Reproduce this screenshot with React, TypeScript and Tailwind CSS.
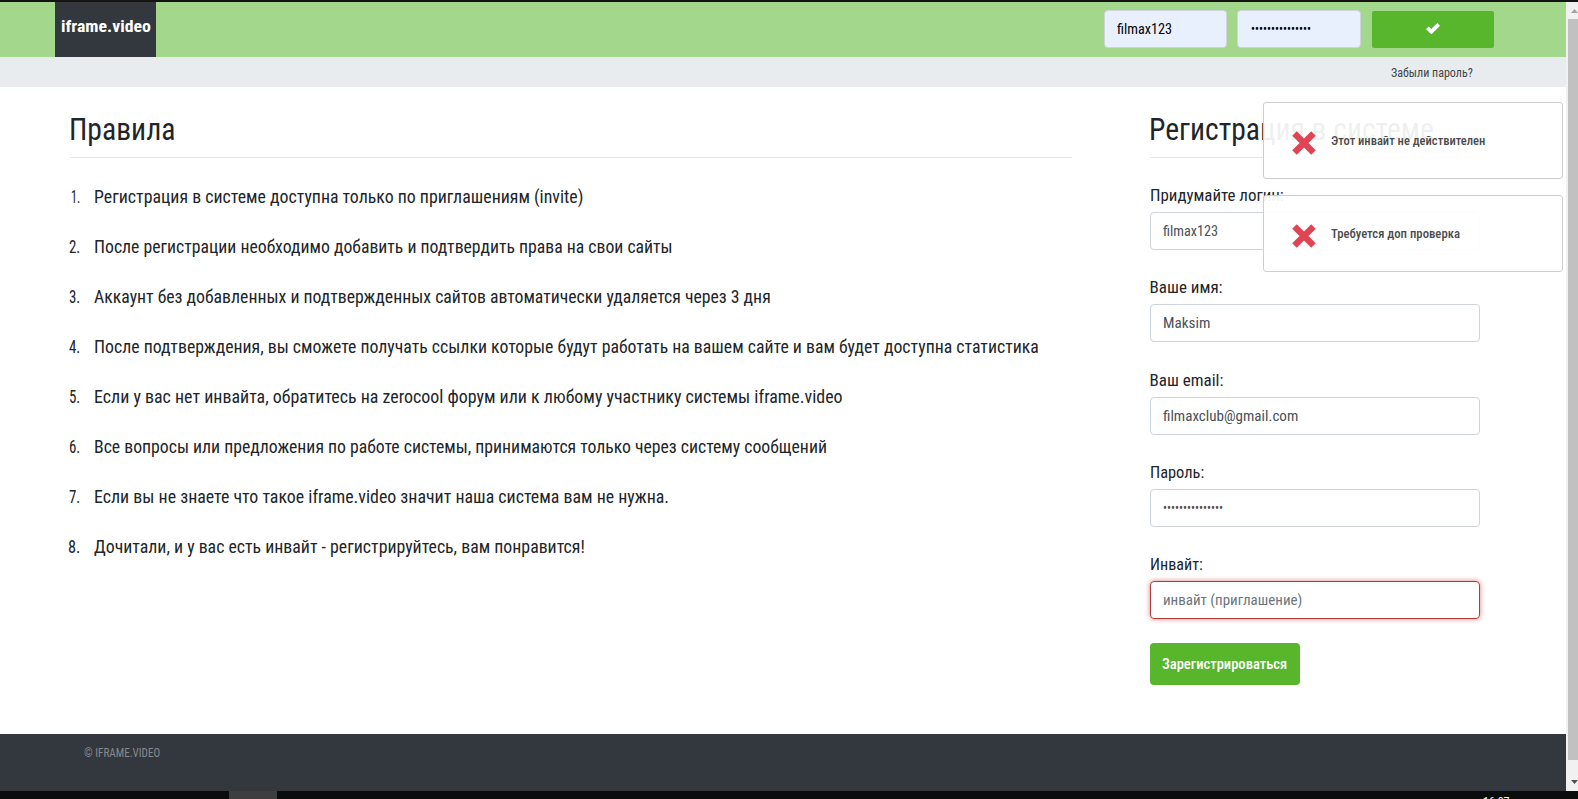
import { useLayoutEffect, useRef, useState } from "react";

/* Text condensed horizontally so that it fills the width of its box. */
function Fit({ children, className = "" }: { children: string; className?: string }) {
  const outer = useRef<HTMLSpanElement>(null);
  const inner = useRef<HTMLSpanElement>(null);
  const [scale, setScale] = useState(1);
  useLayoutEffect(() => {
    const measure = () => {
      if (outer.current && inner.current && inner.current.offsetWidth) {
        setScale(outer.current.getBoundingClientRect().width / inner.current.offsetWidth);
      }
    };
    measure();
    document.fonts.ready.then(measure);
  }, []);
  return (
    <span ref={outer} className={`block shrink-0 whitespace-nowrap ${className}`}>
      <span ref={inner} className="inline-block origin-left" style={{ transform: `scaleX(${scale})` }}>
        {children}
      </span>
    </span>
  );
}

const rules = [
  { text: "Регистрация в системе доступна только по приглашениям (invite)", width: "w-[489px]", num: "w-[9px]" },
  { text: "После регистрации необходимо добавить и подтвердить права на свои сайты", width: "w-[579px]", num: "w-[11px]" },
  { text: "Аккаунт без добавленных и подтвержденных сайтов автоматически удаляется через 3 дня", width: "w-[677px]", num: "w-[11px]" },
  { text: "После подтверждения, вы сможете получать ссылки которые будут работать на вашем сайте и вам будет доступна статистика", width: "w-[945px]", num: "w-[11px]" },
  { text: "Если у вас нет инвайта, обратитесь на zerocool форум или к любому участнику системы iframe.video", width: "w-[749px]", num: "w-[11px]" },
  { text: "Все вопросы или предложения по работе системы, принимаются только через систему сообщений", width: "w-[733px]", num: "w-[11px]" },
  { text: "Если вы не знаете что такое iframe.video значит наша система вам не нужна.", width: "w-[575px]", num: "w-[11px]" },
  { text: "Дочитали, и у вас есть инвайт - регистрируйтесь, вам понравится!", width: "w-[491px]", num: "w-[12px]" },
];

const fields = [
  { label: "Придумайте логин:", labelWidth: "w-[134px]", value: "filmax123", valueWidth: "w-[55px]" },
  { label: "Ваше имя:", labelWidth: "w-[73px]", value: "Maksim", valueWidth: "w-[47px]" },
  { label: "Ваш email:", labelWidth: "w-[74px]", value: "filmaxclub@gmail.com", valueWidth: "w-[135px]" },
  { label: "Пароль:", labelWidth: "w-[54px]", value: "•••••••••••••••", valueWidth: "w-[60px]", secret: true },
  { label: "Инвайт:", labelWidth: "w-[53px]", value: "инвайт (приглашение)", valueWidth: "w-[139px]", invalid: true },
];

function Toast({ text, width }: { text: string; width: string }) {
  return (
    <div className="flex h-[77px] w-[300px] items-center rounded-[3px] border border-[#cdcecf] bg-white/93 pl-[28px] text-[13.5px] font-medium text-[#4a4a4a]">
      <svg className="mt-[4px]" width="24" height="24" viewBox="0 0 24 24" stroke="#e04553" strokeWidth="6.4" fill="none">
        <path d="M2.5 2.5 21.5 21.5M21.5 2.5 2.5 21.5" />
      </svg>
      <Fit className={`ml-[15px] ${width}`}>{text}</Fit>
    </div>
  );
}

export default function App() {
  return (
    <div className="relative flex h-[799px] w-[1578px] flex-col overflow-hidden bg-white font-['Roboto',sans-serif] text-[#212529] [font-stretch:75%]">
      <div className="h-[2px] shrink-0 bg-[#141512]" />
      <div className="flex h-[789px] shrink-0">
        <div className="flex w-[1566px] flex-col">
          <header className="flex h-[55px] shrink-0 bg-[#a3d88c] pl-[55px]">
            <div className="h-[55px] w-[101px] bg-[#33373e] pt-[12px] pl-[5.5px] text-[17px] leading-6 font-bold text-white">
              <Fit className="w-[90px]">iframe.video</Fit>
            </div>
            <div className="mt-[8px] ml-[948px] flex text-[15.5px] text-black">
              <div className="flex h-[38px] w-[123px] items-center rounded-[4px] border border-[#ced4da] bg-[#e8f0fe] pt-[2px] pl-[11.5px]">
                <Fit className="w-[55px]">filmax123</Fit>
              </div>
              <div className="ml-[10px] flex h-[38px] w-[124px] items-center rounded-[4px] border border-[#ced4da] bg-[#e8f0fe] pt-px pl-[12.5px] text-[15px]">
                <Fit className="w-[60px]">•••••••••••••••</Fit>
              </div>
              <div className="mt-px ml-[11px] flex h-[37px] w-[122px] items-center justify-center rounded-[2px] bg-[#58b62c] pb-[3px]">
                <svg width="14" height="11" viewBox="0 0 14 11" stroke="#fff" strokeWidth="3.8" fill="none">
                  <path d="M1.3 4.8 5.4 8.7 12.7 1.4" />
                </svg>
              </div>
            </div>
          </header>

          <div className="h-[30px] shrink-0 bg-[#e8ecef] pt-[5px] pl-[1391px] text-[13.5px] leading-5 text-[#444]">
            <Fit className="w-[82px]">Забыли пароль?</Fit>
          </div>

          <main className="flex h-[647px] shrink-0 pt-[23px] pl-[70px]">
            <section className="w-[1002px]">
              <h1 className="text-[31px] leading-10">
                <Fit className="-ml-px w-[106px]">Правила</Fit>
              </h1>
              <div className="mt-[7px] h-px bg-[#e5e5e6]" />
              <ol className="mt-[14px] text-[19px] leading-[49px]">
                {rules.map((r, i) => (
                  <li key={r.text} className="flex h-[50px]">
                    <div className="flex w-[9.5px] justify-end">
                      <Fit className={r.num}>{`${i + 1}.`}</Fit>
                    </div>
                    <Fit className={`ml-[14.5px] ${r.width}`}>{r.text}</Fit>
                  </li>
                ))}
              </ol>
            </section>

            <section className="ml-[78px] w-[330px]">
              <h1 className="text-[31px] leading-10">
                <Fit className="-ml-px w-[285px]">Регистрация в системе</Fit>
              </h1>
              <div className="mt-[7px] h-px bg-[#e5e5e6]" />
              <div className="mt-[25px] flex flex-col gap-[25.25px]">
                {fields.map((f) => (
                  <div key={f.label}>
                    <div className="text-[17px] leading-6">
                      <Fit className={`-ml-[0.5px] ${f.labelWidth}`}>{f.label}</Fit>
                    </div>
                    <div
                      className={`mt-[5px] flex h-[38px] items-center rounded-[4px] border pl-[11.5px] ${
                        f.invalid
                          ? "border-[#b03a3c] text-[#6c757d] shadow-[0_0_5px_rgba(200,40,40,0.6)]"
                          : "border-[#ced4da] text-[#495057]"
                      } ${f.secret ? "pt-px text-[15px]" : "pt-[1.5px] text-[15.5px]"}`}
                    >
                      <Fit className={f.valueWidth}>{f.value}</Fit>
                    </div>
                  </div>
                ))}
              </div>
              <div className="mt-[24px] flex h-[42px] w-[150px] items-center rounded-[4px] bg-[#58b62c] pt-px pl-[12px] text-[15.5px] font-medium text-white">
                <Fit className="w-[125px]">Зарегистрироваться</Fit>
              </div>
            </section>
          </main>

          <footer className="h-[57px] shrink-0 bg-[#33373e] pt-[9px] pl-[84px] text-[12px] leading-5 text-[#888a8c]">
            <Fit className="w-[76px]">© IFRAME.VIDEO</Fit>
          </footer>
        </div>

        <div className="flex w-[12px] flex-col bg-[#f1f1f1]">
          <div className="flex h-[17px] shrink-0 items-center pl-[5px]">
            <svg width="7" height="4" viewBox="0 0 7 4" fill="#a3a3a3">
              <path d="M0 4 3.5 0 7 4Z" />
            </svg>
          </div>
          <div className="ml-[2px] h-[741px] shrink-0 bg-[#c1c1c1]" />
          <div className="mt-[20px] pl-[5px]">
            <svg className="block" width="7" height="4" viewBox="0 0 7 4" fill="#505050">
              <path d="M0 0 3.5 4 7 0Z" />
            </svg>
          </div>
        </div>
      </div>

      <div className="flex h-[8px] shrink-0 overflow-hidden bg-[#0b0c0c]">
        <div className="ml-[229px] h-[8px] w-[48px] bg-[#3e3e3e]" />
        <div className="ml-[1206px] pt-[4px] text-[12px] leading-[14px] text-white">
          <Fit className="w-[27px]">16:07</Fit>
        </div>
      </div>

      <div className="absolute top-[102px] left-[1263px] flex flex-col gap-[16px]">
        <Toast text="Этот инвайт не действителен" width="w-[154px]" />
        <Toast text="Требуется доп проверка" width="w-[129px]" />
      </div>
    </div>
  );
}
